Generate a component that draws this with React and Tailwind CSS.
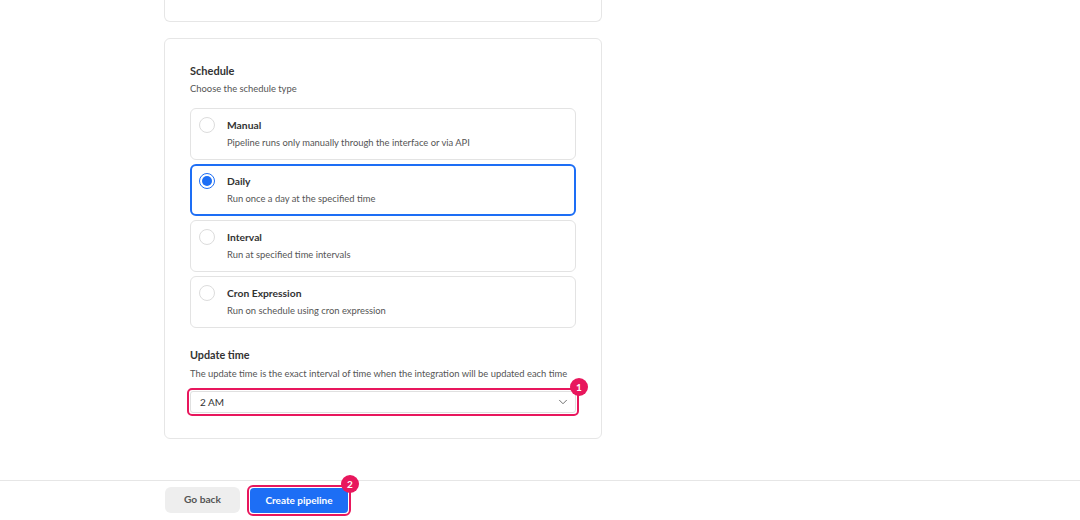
import React from "react";

const options = [
  { title: "Manual", desc: "Pipeline runs only manually through the interface or via API" },
  { title: "Daily", desc: "Run once a day at the specified time", selected: true },
  { title: "Interval", desc: "Run at specified time intervals" },
  { title: "Cron Expression", desc: "Run on schedule using cron expression" },
];

function Badge({ n, className }) {
  return (
    <div
      className={
        "absolute flex h-[18px] w-[18px] items-center justify-center rounded-full bg-[#e8175d] text-[10px] font-bold leading-none text-white " +
        className
      }
    >
      {n}
    </div>
  );
}

export default function App() {
  return (
    <div className="flex h-[520px] w-[1080px] flex-col bg-white font-[Lato,sans-serif] text-[#333]">
      <div className="flex flex-1 flex-col pl-[164px]">
        <div className="h-[22px] w-[438px] rounded-b-md border border-t-0 border-[#e6e6e6]" />
        <div className="mt-[16px] w-[438px] rounded-md border border-[#e6e6e6] px-[25px] pb-[22px] pt-[23px]">
          <div className="text-[11px] font-bold leading-[18px] text-[#333]">Schedule</div>
          <div className="text-[9.4px] leading-[18px] text-[#555]">Choose the schedule type</div>
          <div className="mt-[10px] flex flex-col gap-[4px]">
            {options.map((o) => (
              <div
                key={o.title}
                className={
                  "flex h-[52px] items-start rounded-md " +
                  (o.selected
                    ? "border-2 border-[#1d6ef5] pl-[7px] pt-[7px]"
                    : "border border-[#e3e3e3] pl-[8px] pt-[8px]")
                }
              >
                {o.selected ? (
                  <div className="flex h-[16px] w-[16px] shrink-0 items-center justify-center rounded-full border-[1.5px] border-[#1d6ef5]">
                    <div className="h-[10px] w-[10px] rounded-full bg-[#1d6ef5]" />
                  </div>
                ) : (
                  <div className="h-[16px] w-[16px] shrink-0 rounded-full border border-[#dcdcdc]" />
                )}
                <div className="ml-[12px] flex flex-col">
                  <div className="text-[10.3px] font-bold leading-[16px] text-[#333]">{o.title}</div>
                  <div className="text-[9.4px] leading-[20px] text-[#555]">{o.desc}</div>
                </div>
              </div>
            ))}
          </div>
          <div className="mt-[18px] text-[10.8px] font-bold leading-[18px] text-[#333]">Update time</div>
          <div className="text-[9.4px] leading-[19px] text-[#555]">
            The update time is the exact interval of time when the integration will be updated each time
          </div>
          <div className="relative -mx-[3px] mt-[5px] rounded-[5px] border-2 border-[#e8175d] p-[1px]">
            <div className="flex h-[22px] items-center justify-between rounded-[3px] border border-[#e0e0e0] pl-[9px] pr-[5px]">
              <span className="text-[10px] leading-none text-[#333]">2 AM</span>
              <svg width="14" height="14" viewBox="0 0 24 24" fill="none" stroke="#666" strokeWidth="1.6" strokeLinecap="round" strokeLinejoin="round">
                <path d="M6 9l6 6 6-6" />
              </svg>
            </div>
            <Badge n="1" className="-right-[11px] -top-[12px]" />
          </div>
        </div>
      </div>
      <div className="flex h-[40px] items-start border-t border-[#e6e6e6] pl-[165px] pt-[4px]">
        <button className="mt-[2px] flex h-[26px] w-[75px] items-center justify-center rounded-md bg-[#eeeeee] text-[10.2px] font-bold text-[#555]">
          Go back
        </button>
        <div className="relative ml-[7px] rounded-[6px] border-2 border-[#e8175d] p-[1px]">
          <button className="flex h-[25px] w-[98px] items-center justify-center rounded-[4px] bg-[#1d6ef5] text-[10px] font-bold text-white">
            Create pipeline
          </button>
          <Badge n="2" className="-right-[10px] -top-[12px]" />
        </div>
      </div>
    </div>
  );
}
